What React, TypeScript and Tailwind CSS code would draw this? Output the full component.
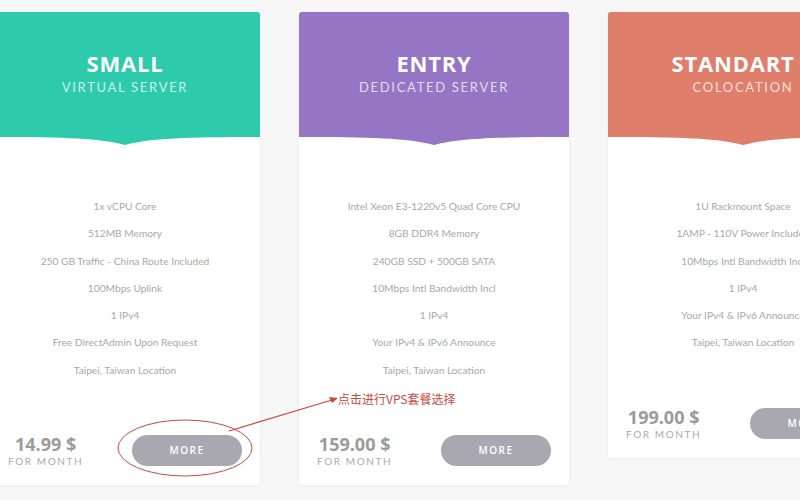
import React from 'react'

type Plan = {
  title: string
  subtitle: string
  color: string
  features: string[]
  price: string
}

const plans: Plan[] = [
  {
    title: 'SMALL',
    subtitle: 'VIRTUAL SERVER',
    color: '#2ecaac',
    features: [
      '1x vCPU Core',
      '512MB Memory',
      '250 GB Traffic - China Route Included',
      '100Mbps Uplink',
      '1 IPv4',
      'Free DirectAdmin Upon Request',
      'Taipei, Taiwan Location',
    ],
    price: '14.99 $',
  },
  {
    title: 'ENTRY',
    subtitle: 'DEDICATED SERVER',
    color: '#9575c4',
    features: [
      'Intel Xeon E3-1220v5 Quad Core CPU',
      '8GB DDR4 Memory',
      '240GB SSD + 500GB SATA',
      '10Mbps Intl Bandwidth Incl',
      '1 IPv4',
      'Your IPv4 & IPv6 Announce',
      'Taipei, Taiwan Location',
    ],
    price: '159.00 $',
  },
  {
    title: 'STANDART 1',
    subtitle: 'COLOCATION',
    color: '#de7e6b',
    features: [
      '1U Rackmount Space',
      '1AMP - 110V Power Included',
      '10Mbps Intl Bandwidth Incl',
      '1 IPv4',
      'Your IPv4 & IPv6 Announce',
      'Taipei, Taiwan Location',
    ],
    price: '199.00 $',
  },
]

function Notch({ color }: { color: string }) {
  return (
    <svg width="270" height="8" viewBox="0 0 270 8" className="block">
      <path d="M0 0 L270 0 C200 0 160 1 135 8 C110 1 70 0 0 0 Z" fill={color} />
    </svg>
  )
}

function PlanCard({ plan }: { plan: Plan }) {
  return (
    <div className="w-[270px] shrink-0 bg-white rounded-[3px] shadow-[0_1px_4px_rgba(0,0,0,0.06)]">
      <div
        className="h-[125px] rounded-t-[3px] flex flex-col items-center pt-[38px] overflow-hidden whitespace-nowrap"
        style={{ backgroundColor: plan.color }}
      >
        <h3 className="font-['Open_Sans',sans-serif] text-white text-[22px] font-bold leading-[26px] tracking-[0.8px]">
          {plan.title}
        </h3>
        <p className="font-['Lato',sans-serif] text-white/75 text-[13px] leading-[18px] tracking-[1.7px] mt-[2px]">
          {plan.subtitle}
        </p>
      </div>
      <Notch color={plan.color} />
      <ul className="pt-[48px] font-['Lato',sans-serif] text-[10.2px] text-[#a8a8a8] text-center">
        {plan.features.map((f) => (
          <li key={f} className="h-[27.3px] leading-[27px] whitespace-nowrap">
            {f}
          </li>
        ))}
      </ul>
      <div className="flex items-center justify-between px-[18px] pt-[49px] pb-[17px]">
        <div className="flex flex-col items-center">
          <span className="font-['Open_Sans',sans-serif] font-bold text-[18px] leading-[22px] text-[#9b9b9b]">
            {plan.price}
          </span>
          <span className="font-['Lato',sans-serif] text-[10px] leading-[13px] tracking-[1.6px] text-[#aaaaaa]">
            FOR MONTH
          </span>
        </div>
        <button className="w-[110px] h-[31px] rounded-full bg-[#a9a8b0] text-white font-['Open_Sans',sans-serif] font-semibold text-[10px] tracking-[1.5px]">
          MORE
        </button>
      </div>
    </div>
  )
}

export default function App() {
  return (
    <div className="relative w-[800px] h-[500px] overflow-hidden bg-[#f7f7f7]">
      <div className="flex items-start gap-[39px] ml-[-10px] pt-[12px]">
        {plans.map((p) => (
          <PlanCard key={p.title} plan={p} />
        ))}
      </div>

      <svg className="absolute left-0 top-0 pointer-events-none" width="800" height="500">
        <ellipse cx="185" cy="448" rx="67" ry="28" fill="none" stroke="#c9483f" strokeWidth="1" />
        <line x1="229" y1="431" x2="332" y2="400" stroke="#c9483f" strokeWidth="1.2" />
        <path d="M338 398 L329 397 L332 403 Z" fill="#c9483f" />
      </svg>
      <span className="absolute left-[338px] top-[391px] font-['Noto_Sans_CJK_SC',sans-serif] text-[12px] leading-[15px] text-[#c9483f] whitespace-nowrap">
        点击进行VPS套餐选择
      </span>
    </div>
  )
}
